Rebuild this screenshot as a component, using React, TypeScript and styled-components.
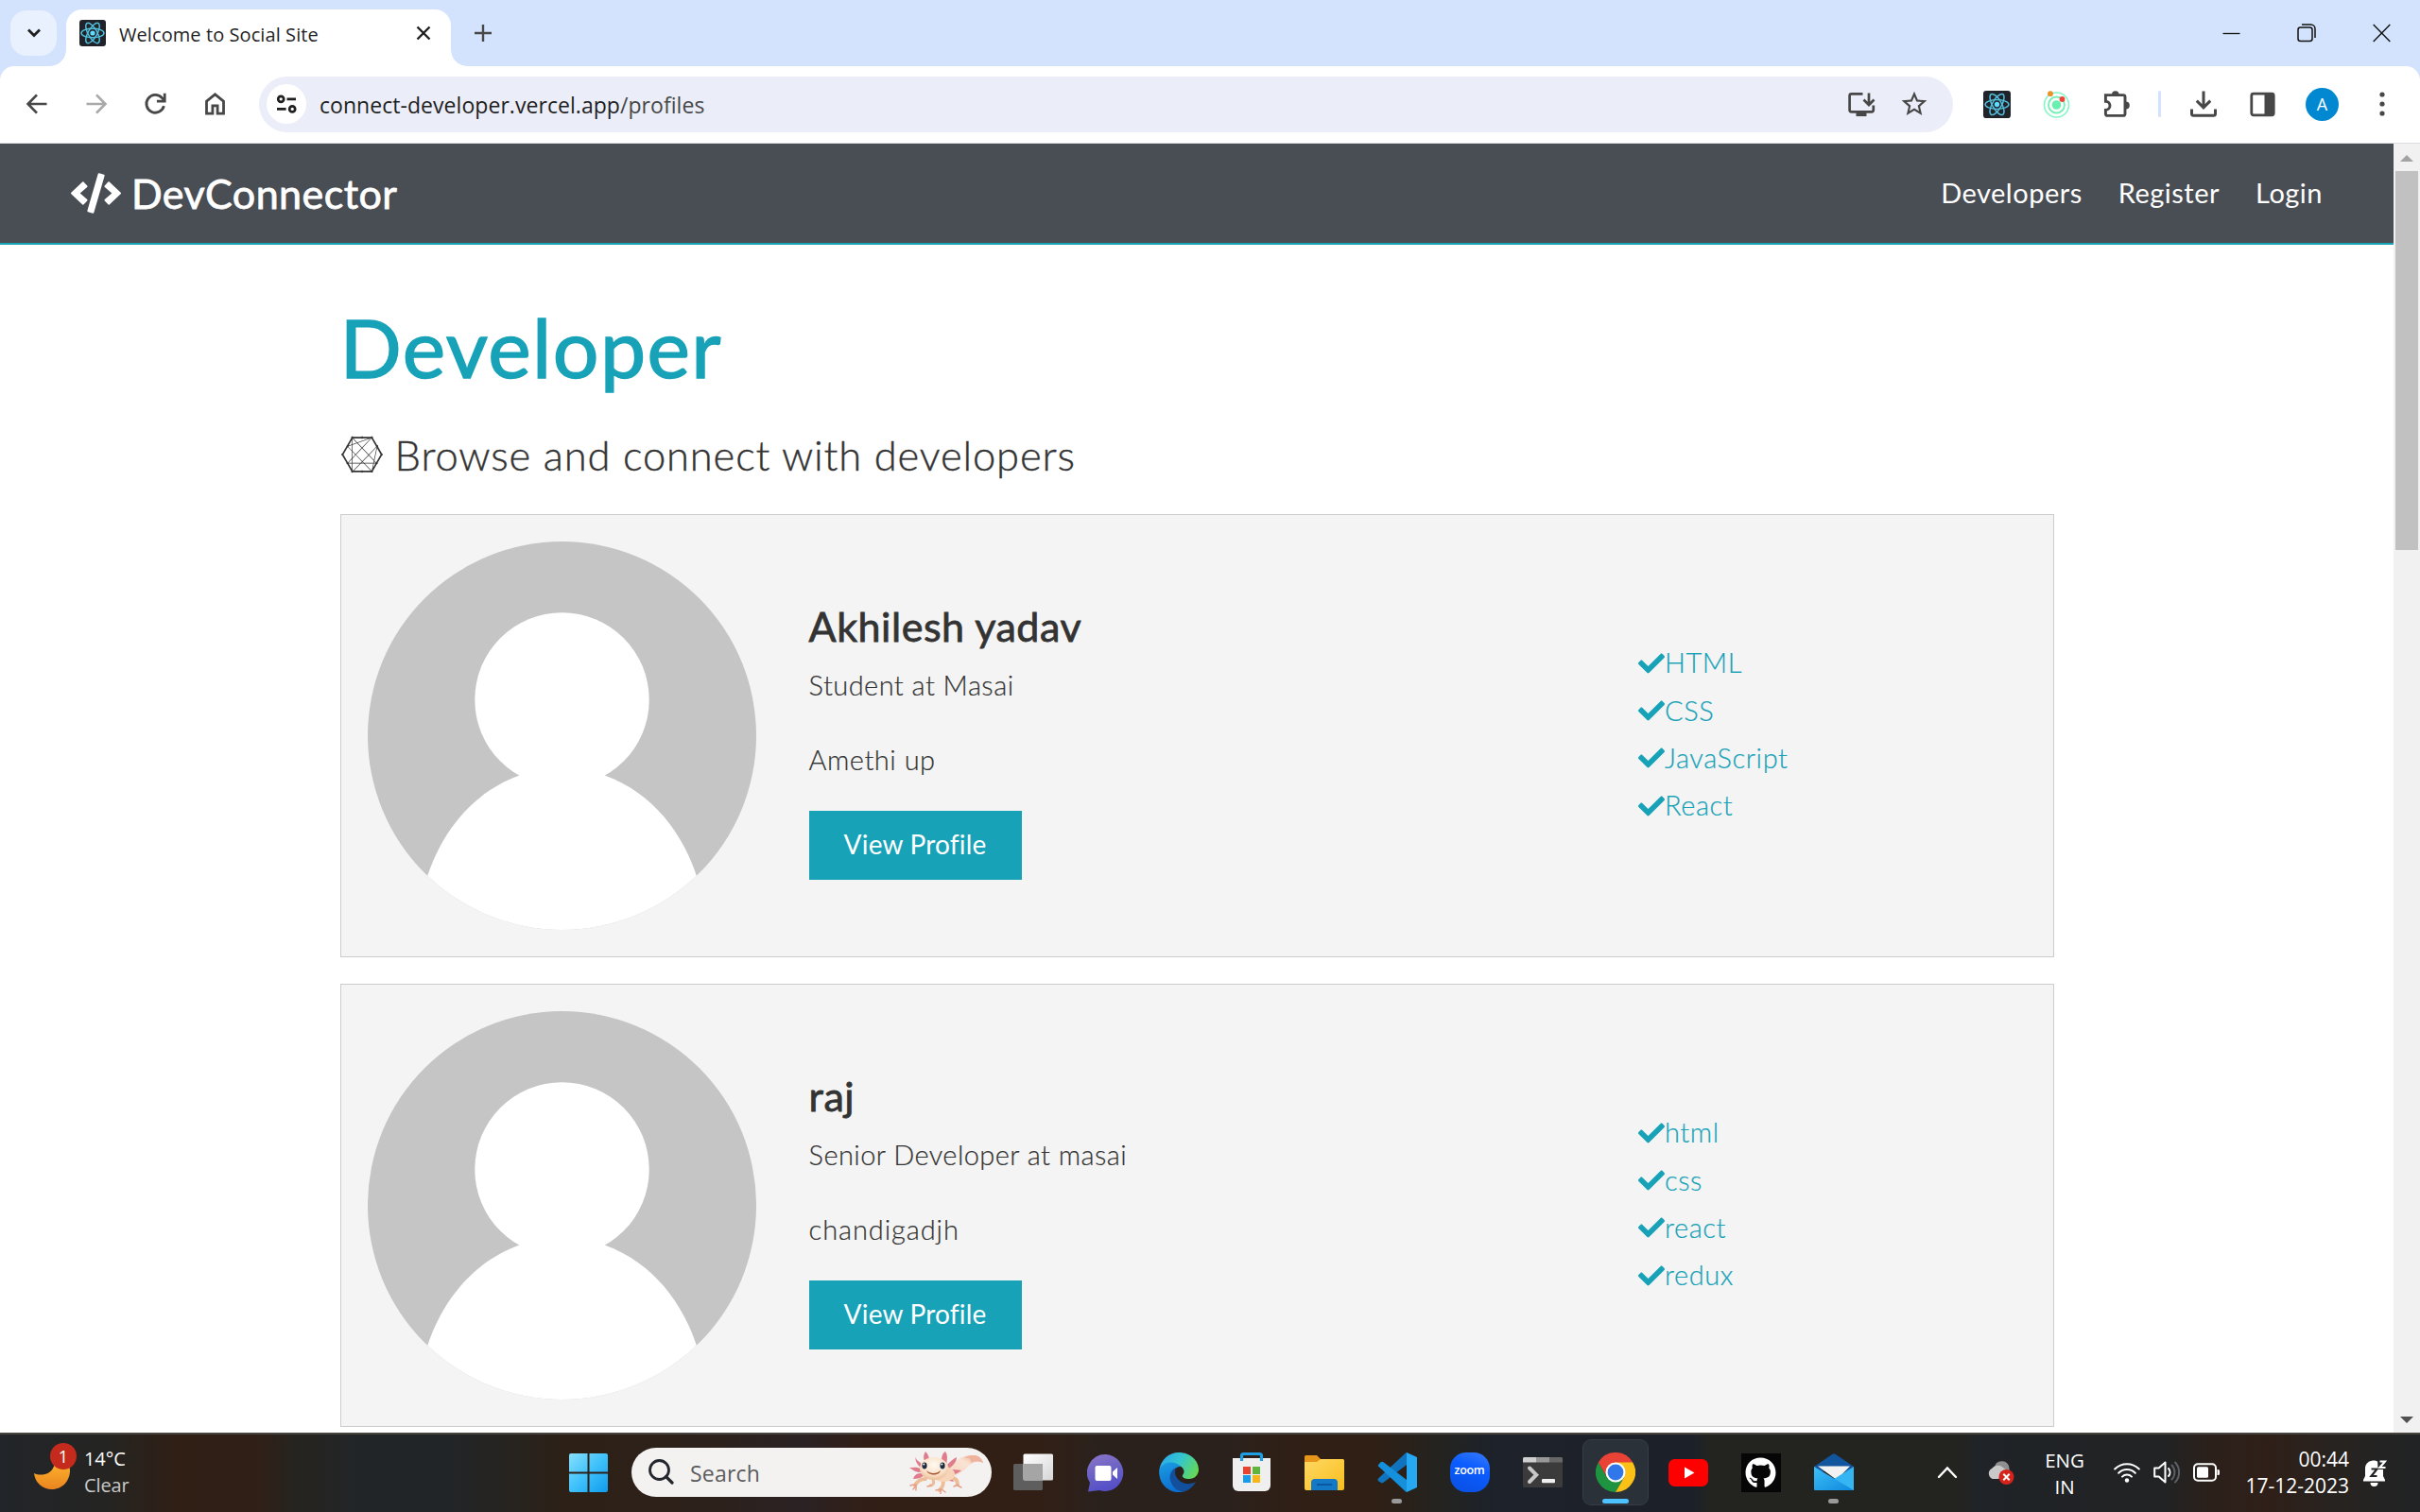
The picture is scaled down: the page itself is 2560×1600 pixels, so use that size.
import React from "react";
import styled, { createGlobalStyle, css } from "styled-components";
import { FaCheck, FaCode, FaConnectdevelop, FaGithub } from "react-icons/fa";

const TEAL = "#17a2b8";
const SITE_FONT = `"Lato", "Open Sans", sans-serif`;
const UI_FONT = `"Open Sans", "Noto Sans", sans-serif`;

const GlobalStyle = createGlobalStyle`
  * { box-sizing: border-box; }
  body { margin: 0; background: #fff; overflow: hidden; }
  h1, h2, p, ul { margin: 0; padding: 0; font-weight: inherit; }
  svg { display: block; flex: none; }
`;

const Screen = styled.div`
  width: 2560px;
  height: 1600px;
  display: flex;
  flex-direction: column;
  overflow: hidden;
  font-family: ${UI_FONT};
`;

/* ---------- browser frame ---------- */

const TabStrip = styled.div`
  height: 70px;
  flex: none;
  display: flex;
  align-items: flex-end;
  background: #d3e3fd;
`;

const TabSearchButton = styled.div`
  width: 49px;
  height: 48px;
  margin: 0 10px 11px 11px;
  border-radius: 17px;
  background: #e9f1fe;
  display: flex;
  align-items: center;
  justify-content: center;
`;

const Tab = styled.div`
  position: relative;
  width: 407px;
  height: 60px;
  border-radius: 17px 17px 0 0;
  background: #fff;
  display: flex;
  align-items: center;
  padding: 0 21px 10px 14px;
  &::before,
  &::after {
    content: "";
    position: absolute;
    bottom: 0;
    width: 17px;
    height: 17px;
  }
  &::before {
    left: -17px;
    background: radial-gradient(circle at 0 0, transparent 16.5px, #fff 17px);
  }
  &::after {
    right: -17px;
    background: radial-gradient(circle at 100% 0, transparent 16.5px, #fff 17px);
  }
`;

const TabTitle = styled.span`
  flex: 1;
  margin-left: 14px;
  padding-top: 3px;
  font-size: 20px;
  letter-spacing: 0.08px;
  line-height: 28px;
  color: #1f1f1f;
  white-space: nowrap;
`;

const NewTab = styled.div`
  width: 20px;
  margin: 0 auto 25px 24px;
`;

const WindowControls = styled.div`
  display: flex;
  gap: 60px;
  margin: 0 31px 25px 0;
`;

const ToolbarBack = styled.div`
  height: 82px;
  flex: none;
  background: #d3e3fd;
`;

const Toolbar = styled.div`
  height: 82px;
  border-bottom: 1px solid #dcdde1;
  border-radius: 15px 15px 0 0;
  background: #fff;
  display: flex;
  align-items: center;
  padding: 0 25px 1px 23px;
`;

const NavButtons = styled.div`
  display: flex;
  gap: 31px;
  margin-right: 30px;
`;

const Omnibox = styled.div`
  width: 1792px;
  height: 59px;
  flex: none;
  border-radius: 30px;
  background: #ebeef8;
  display: flex;
  align-items: center;
  padding: 0 25px 0 8px;
  color: #474747;
`;

const SiteInfo = styled.div`
  width: 42px;
  height: 42px;
  border-radius: 50%;
  background: #fff;
  display: flex;
  align-items: center;
  justify-content: center;
`;

const Url = styled.span`
  flex: 1;
  margin-left: 14px;
  padding-top: 2px;
  font-size: 23px;
  line-height: 34px;
  letter-spacing: 0.05px;
  color: #1f1f1f;
  white-space: nowrap;
`;

const UrlPath = styled.span`
  color: #474747;
`;

const BoxActions = styled.div`
  display: flex;
  gap: 24px;
`;

const Extensions = styled.div`
  display: flex;
  flex: none;
  align-items: center;
  gap: 31.5px;
  margin-left: 32px;
`;

const Divider = styled.div`
  width: 3px;
  height: 28px;
  margin: 0 -2px 0 -4px;
  border-radius: 2px;
  background: #d3e3fd;
`;

const Avatar = styled.div`
  width: 35px;
  height: 35px;
  border-radius: 50%;
  background: #0288d1;
  color: #fff;
  font-size: 18px;
  line-height: 35px;
  text-align: center;
`;

/* ---------- web page ---------- */

const Viewport = styled.div`
  height: 1364px;
  flex: none;
  display: flex;
  overflow: hidden;
  background: #fff;
`;

const Page = styled.div`
  width: 2532px;
  height: 1364px;
  overflow: hidden;
  font-family: ${SITE_FONT};
  font-size: 29px;
  line-height: 44.8px;
  color: #333;
`;

const SiteNav = styled.nav`
  height: 107px;
  display: flex;
  align-items: center;
  justify-content: space-between;
  padding: 0 75px;
  border-bottom: 2px solid ${TEAL};
  background: #494d54;
  color: #fff;
`;

const Brand = styled.div`
  display: flex;
  align-items: center;
  gap: 11px;
  font-size: 43px;
  line-height: 50px;
  letter-spacing: 0.45px;
  -webkit-text-stroke: 0.8px #fff;
`;

const NavLinks = styled.ul`
  display: flex;
  gap: 38px;
  padding: 0 0 1px;
  list-style: none;
  letter-spacing: 0.5px;
`;

const Main = styled.main`
  width: 1813px;
  margin-left: 359.6px;
  padding-top: 58px;
`;

const Title = styled.h1`
  height: 100px;
  font-size: 86px;
  line-height: 100px;
  letter-spacing: 1.4px;
  color: ${TEAL};
  -webkit-text-stroke: 1.4px ${TEAL};
`;

const Lead = styled.p`
  display: flex;
  align-items: center;
  gap: 12px;
  height: 50px;
  margin: 39px 0 38px;
  font-size: 43.5px;
  font-weight: 300;
  line-height: 50px;
  letter-spacing: 0.85px;
  -webkit-text-stroke: 0.4px #333;
`;

const ProfileCard = styled.section`
  display: grid;
  grid-template-columns: 2fr 4fr 2fr;
  gap: 56px;
  align-items: center;
  height: 468.75px;
  margin-bottom: 28.25px;
  padding: 28px;
  border: 1px solid #ccc;
  background: #f4f4f4;
  font-weight: 300;
`;

const Info = styled.div`
  padding-top: 12px;
  -webkit-text-stroke: 0.2px currentColor;
`;

const Name = styled.h2`
  margin-bottom: 14px;
  font-size: 43px;
  font-weight: 400;
  line-height: 50px;
  letter-spacing: 0.55px;
  -webkit-text-stroke: 0.8px #333;
`;

const Line = styled.p<{ $track: number }>`
  margin-bottom: 34px;
  line-height: 45px;
  letter-spacing: ${(p) => p.$track}px;
  & + & {
    margin-bottom: 32px;
  }
`;

const ProfileButton = styled.a`
  display: block;
  width: 225px;
  height: 73px;
  background: ${TEAL};
  color: #fff;
  font-size: 28px;
  font-weight: 400;
  line-height: 70px;
  text-align: center;
  letter-spacing: 0.2px;
  -webkit-text-stroke: 0;
`;

const Skills = styled.ul`
  padding-top: 3px;
  list-style: none;
  color: ${TEAL};
  -webkit-text-stroke: 0.2px ${TEAL};
`;

const Skill = styled.li`
  display: flex;
  align-items: center;
  margin-bottom: 5.6px;
  letter-spacing: 0.6px;
`;

const ScrollTrack = styled.div`
  width: 28px;
  display: flex;
  flex-direction: column;
  align-items: center;
  background: #f1f1f1;
`;

const ScrollThumb = styled.div`
  width: 24px;
  height: 401px;
  margin: 14px 0 auto;
  background: #c1c1c1;
`;

const ArrowUp = styled.div`
  margin-top: 12px;
  border: 7px solid transparent;
  border-top-width: 0;
  border-bottom-color: #a3a3a3;
  margin-bottom: -4px;
`;

const ArrowDown = styled.div`
  margin-bottom: 10px;
  border: 7px solid transparent;
  border-bottom-width: 0;
  border-top-color: #505050;
`;

/* ---------- taskbar ---------- */

const TaskbarRoot = styled.div`
  height: 84px;
  flex: none;
  display: flex;
  align-items: center;
  border-top: 2px solid #47433f;
  padding-bottom: 2px;
  color: #fff;
  background: linear-gradient(
    90deg,
    #222529 0, #242422 110px, #301f15 190px, #301f16 270px, #26241f 310px,
    #222528 380px, #222528 470px, #26231f 540px, #2d2016 600px, #2c211b 760px,
    #2b2224 850px, #311f15 920px, #311f15 1100px, #2b211c 1160px, #2b211c 1300px,
    #301f15 1370px, #301f15 1450px, #24231f 1520px, #1d222b 1580px,
    #1c2129 1790px, #232420 1810px, #23231f 2070px, #202327 2090px,
    #212324 2290px, #2c201b 2340px, #2f1f18 2400px, #272320 2470px, #212325 2560px
  );
`;

const Weather = styled.div`
  position: relative;
  width: 584px;
  height: 80px;
  display: flex;
  align-items: center;
  padding-left: 34px;
`;

const WeatherText = styled.div`
  display: flex;
  flex-direction: column;
  margin-left: 12px;
  font-size: 20px;
  line-height: 28px;
  letter-spacing: -0.1px;
`;

const Condition = styled.span`
  color: #c8c8c8;
`;

const Badge = styled.div`
  position: absolute;
  left: 53px;
  top: 9px;
  width: 28px;
  height: 28px;
  border-radius: 50%;
  background: #c42b1c;
  font-size: 18px;
  line-height: 28px;
  text-align: center;
`;

const Slot = styled.div`
  position: relative;
  width: 77px;
  height: 80px;
  flex: none;
  display: flex;
  align-items: center;
  justify-content: center;
`;

const ActiveTile = styled.div`
  width: 70px;
  height: 70px;
  border: 1px solid #363d44;
  border-radius: 9px;
  background: #2a3138;
  display: flex;
  align-items: center;
  justify-content: center;
`;

const Indicator = styled.div<{ $active?: boolean }>`
  position: absolute;
  bottom: 7px;
  height: 5px;
  border-radius: 3px;
  ${(p) =>
    p.$active
      ? css`
          width: 28px;
          background: #4cc2ff;
        `
      : css`
          width: 11px;
          background: #9a9a9a;
        `}
`;

const SearchPill = styled.div`
  width: 381px;
  height: 52px;
  margin: 0 5px 0 7px;
  flex: none;
  border-radius: 26px;
  background: #f3f2f1;
  display: flex;
  align-items: center;
  padding: 0 8px 0 17px;
  color: #5c5c5c;
  font-size: 23px;
  line-height: 32px;
  letter-spacing: 0.2px;
`;

const SearchLabel = styled.span`
  flex: 1;
  margin-left: 17px;
  padding-top: 1px;
`;

const Tray = styled.div`
  flex: 1;
  display: flex;
  align-items: center;
  justify-content: flex-end;
  padding-right: 35px;
  font-size: 21px;
  line-height: 28px;
`;

const Language = styled.div`
  width: 44px;
  margin: 2px 30px 0 31px;
  font-size: 20.5px;
  text-align: center;
`;

const TrayIcons = styled.div`
  display: flex;
  align-items: center;
  gap: 14px;
`;

const Clock = styled.div`
  width: 112px;
  margin: 0 15px 1px 25px;
  text-align: right;
`;

const CloudWrap = styled.div`
  margin-left: 31px;
`;

/* ---------- drawings ---------- */

const Atom = ({ size }: { size: number }) => (
  <svg width={size} height={size} viewBox="0 0 28 28">
    <rect width="28" height="28" rx="3" fill="#20232a" />
    <g fill="none" stroke="#53c1de" strokeWidth="1.4">
      <ellipse cx="14" cy="14" rx="12" ry="4.7" />
      <ellipse cx="14" cy="14" rx="12" ry="4.7" transform="rotate(60 14 14)" />
      <ellipse cx="14" cy="14" rx="12" ry="4.7" transform="rotate(120 14 14)" />
    </g>
    <circle cx="14" cy="14" r="2.6" fill="#61dafb" />
  </svg>
);

const line = (color: string, w: number) => ({
  fill: "none",
  stroke: color,
  strokeWidth: w,
});

const BackIcon = ({ color = "#474747", flip = false }: { color?: string; flip?: boolean }) => (
  <svg width="32" height="32" viewBox="0 0 32 32" {...line(color, 2.7)} transform={flip ? "scale(-1 1)" : undefined}>
    <path d="M26.5 16H7M16 6.4 6.6 16l9.4 9.6" />
  </svg>
);

const ReloadIcon = () => (
  <svg width="32" height="32" viewBox="0 0 32 32" {...line("#474747", 2.8)}>
    <path d="M24.4 18.2a9.4 9.4 0 1 1-2-8.6l2.2 2.6" />
    <path d="M25.2 4.8v8.3h-8.3" />
  </svg>
);

const HomeIcon = () => (
  <svg width="32" height="32" viewBox="0 0 32 32" {...line("#474747", 2.8)}>
    <path d="M6.500 26.2V13.2l9-7.3 9 7.3v13h-6.4v-8.4h-5.2v8.4z" />
  </svg>
);

const TuneIcon = () => (
  <svg width="24" height="24" viewBox="0 0 24 24" {...line("#1f1f1f", 2.7)}>
    <circle cx="6.2" cy="6.8" r="3" />
    <path d="M12.5 6.8H22M2 17.4h9.6" />
    <circle cx="18.2" cy="17.4" r="3" />
  </svg>
);

const InstallIcon = () => (
  <svg width="32" height="32" viewBox="0 0 32 32" {...line("#474747", 2.7)}>
    <path d="M17.5 5.3H5.6a2 2 0 0 0-2 2v15a2 2 0 0 0 2 2h21.2a2 2 0 0 0 2-2v-4.8" />
    <path d="M24 4.5v12M18.5 11.5 24 17l5.5-5.5" />
    <path d="M10.5 26.8h11" strokeWidth="4.5" />
  </svg>
);

const StarIcon = () => (
  <svg width="32" height="32" viewBox="0 0 24 24" fill="#474747">
    <path d="M22 9.24l-7.19-.62L12 2 9.19 8.63 2 9.24l5.46 4.73L5.82 21 12 17.27 18.18 21l-1.63-7.03L22 9.24zM12 15.4l-3.76 2.27 1-4.28-3.32-2.88 4.38-.38L12 6.1l1.71 4.04 4.38.38-3.32 2.88 1 4.28L12 15.4z" />
  </svg>
);

const OrbitIcon = () => (
  <svg width="33" height="29" viewBox="-2 0 33 29">
    <circle cx="14.5" cy="15" r="13" {...line("#86f5c6", 1.6)} />
    <circle cx="14.5" cy="15" r="8.5" {...line("#74efb6", 1.8)} />
    <circle cx="14.5" cy="15" r="4.8" fill="#69f0ae" />
    <circle cx="8" cy="3.2" r="2.9" fill="#e8922c" />
    <circle cx="20.5" cy="9" r="2.9" fill="#f04438" />
  </svg>
);

const PuzzleIcon = () => (
  <svg width="32" height="32" viewBox="0 0 32 32">
    <path
      {...line("#474747", 2.9)}
      d="M4.4 6.6h18.8a1.8 1.8 0 0 1 1.8 1.8v18.2a1.8 1.8 0 0 1-1.8 1.8H6.2a1.8 1.8 0 0 1-1.8-1.8v-4.2a4.6 4.6 0 0 0 0-9.200z"
    />
    <path fill="#474747" d="M11 6a3.8 3.8 0 0 1 7.6 0zM25.8 13.6a4 4 0 0 1 0 8z" />
  </svg>
);

const DownloadIcon = () => (
  <svg width="32" height="32" viewBox="0 0 32 32" {...line("#474747", 3)}>
    <path d="M16 2.5v17M8.8 12.6l7.2 7.2 7.2-7.2" />
    <path d="M3.5 21.5v4.7a2 2 0 0 0 2 2h21a2 2 0 0 0 2-2v-4.7" />
  </svg>
);

const SidePanelIcon = () => (
  <svg width="29" height="27" viewBox="-1 0 29 27">
    <rect x="1.8" y="2.2" width="23.4" height="22.6" rx="2" {...line("#474747", 2.8)} />
    <path d="M15.5 2h8a2 2 0 0 1 2 2v19a2 2 0 0 1-2 2h-8z" fill="#474747" />
  </svg>
);

const MoreIcon = () => (
  <svg width="28" height="28" viewBox="0 0 28 28" fill="#474747">
    <circle cx="14" cy="4" r="2.6" />
    <circle cx="14" cy="14" r="2.6" />
    <circle cx="14" cy="24" r="2.6" />
  </svg>
);

const Silhouette = () => (
  <svg width="411" height="411" viewBox="0 0 410 410">
    <defs>
      <clipPath id="portrait">
        <circle cx="205" cy="205" r="205" />
      </clipPath>
    </defs>
    <g clipPath="url(#portrait)">
      <rect width="410" height="410" fill="#c5c5c5" />
      <circle cx="205" cy="167" r="92" fill="#fff" />
      <path d="M62 356C77 309 108 266 160 247H250C302 266 333 309 348 356V410H62Z" fill="#fff" />
    </g>
  </svg>
);

const MoonIcon = () => (
  <svg width="43" height="40" viewBox="0 0 43 40">
    <defs>
      <linearGradient id="moon" x1="0" y1="0" x2="0" y2="1">
        <stop offset="0" stopColor="#ffbe2e" />
        <stop offset="1" stopColor="#ea8420" />
      </linearGradient>
    </defs>
    <path d="M2 21c9 4 24 1 22-18 9-1 16 6 16 15 0 11-8 20-19 20C11 38 3 31 2 21z" fill="url(#moon)" />
  </svg>
);

const WindowsLogo = () => (
  <svg width="41" height="41" viewBox="0 0 41 41">
    <defs>
      <linearGradient id="win" x1="0" y1="0" x2="1" y2="1">
        <stop offset="0" stopColor="#88dffc" />
        <stop offset="0.5" stopColor="#3fc1fb" />
        <stop offset="1" stopColor="#0f9bec" />
      </linearGradient>
    </defs>
    <path
      fill="url(#win)"
      d="M2 0h17.5v19.5H0V2a2 2 0 0 1 2-2zM21.5 0H39a2 2 0 0 1 2 2v17.5H21.5zM0 21.5h19.5V41H2a2 2 0 0 1-2-2zM21.5 21.5H41V39a2 2 0 0 1-2 2H21.5z"
    />
  </svg>
);

const Magnifier = () => (
  <svg width="28" height="28" viewBox="0 0 28 28" {...line("#23262d", 2.8)} strokeLinecap="round">
    <circle cx="12.5" cy="11.5" r="10" />
    <path d="M19.6 18.6 26 25" strokeWidth="3.2" />
  </svg>
);

const Axolotl = () => (
  <svg width="80" height="46" viewBox="0 0 80 46">
    <defs>
      <linearGradient id="tail" x1="0" y1="1" x2="1" y2="0">
        <stop offset="0" stopColor="#f6d3b8" />
        <stop offset="0.6" stopColor="#fae3d4" />
        <stop offset="1" stopColor="#e79a78" />
      </linearGradient>
      <radialGradient id="axoface" cx="0.5" cy="0.35" r="0.7">
        <stop offset="0" stopColor="#fff8ef" />
        <stop offset="0.6" stopColor="#fae2cb" />
        <stop offset="1" stopColor="#eab68e" />
      </radialGradient>
    </defs>
    <path d="M39 23C46 11 59 4 69 5c5 0 9 4 10 8-8-3-12 0-18 6-6 5-13 9-19 9z" fill="url(#tail)" />
    <path d="M69 5c5 0 9 4 10 8-5-3-9-2-13 0 1-4-2-6-7-5 3-2 7-3 10-3z" fill="#efb29c" />
    <g fill="#e07d8c">
      <path d="M13 13C8 10 6 6 9 6c-4 0 0 11 6 13z" />
      <path d="M17 11C15 6 17 3 18 1c3 3 4 6 4 10zM35 11c0-6 2-9 4-10 3 4 2 9 1 14z" />
      <path d="M41 15c4-4 6-6 10-8 0 5-4 9-8 12zM43 20c5 0 9 0 13 1-5 4-8 5-12 3zM40 26c4 1 7 4 8 7-5-1-8-2-11-5z" />
      <path d="M13 19C8 17 5 18 1 18c4 3 7 5 12 5zM13 24c-5 0-7 3-8 6 5 0 8-1 12-4z" />
    </g>
    <g fill="none" stroke="#edbd98" strokeWidth="4" strokeLinecap="round">
      <path d="M18 30c-4 0-9 2-11 7M36 30c2 4 0 9-3 12M45 29c6 0 7 4 7 7" />
      <path d="M26 31c2 4-1 6-3 6" strokeWidth="3" />
    </g>
    <g fill="none" stroke="#e69f88" strokeWidth="1.4" strokeLinecap="round">
      <path d="M8 36c-2 0-4 0-6 1M8 37l-3 4M8 38v4M34 41l-5 1M34 42v4M35 41l4 3M52 36l-4 2M52 37l4 2M24 37l-4 1" />
    </g>
    <ellipse cx="37" cy="25" rx="12" ry="8" fill="#f6d5b9" />
    <ellipse cx="27" cy="19" rx="15" ry="12" fill="url(#axoface)" />
    <ellipse cx="17" cy="16" rx="2.6" ry="3.4" fill="#1d2c43" />
    <ellipse cx="36" cy="16" rx="2.6" ry="3.4" fill="#1d2c43" />
    <circle cx="16.3" cy="14.6" r="1" fill="#fff" />
    <circle cx="35.3" cy="14.6" r="1" fill="#fff" />
    <path d="M19 21c4 4 11 4 15 0-1 6-13 6-15 0z" fill="#a8552d" />
  </svg>
);

const TaskViewIcon = () => (
  <svg width="42" height="40" viewBox="0 0 42 40">
    <defs>
      <linearGradient id="pane" x1="0" y1="0" x2="1" y2="1">
        <stop offset="0" stopColor="#fff" />
        <stop offset="1" stopColor="#d6d6d6" />
      </linearGradient>
    </defs>
    <rect x="0" y="11" width="31" height="28" rx="1.5" fill="#5e5e5e" />
    <rect x="10.5" y="0.5" width="31.5" height="28" rx="1.5" fill="url(#pane)" />
    <path d="M10.5 11H31v17.5H12a1.5 1.5 0 0 1-1.5-1.5z" fill="#a5a5a5" />
  </svg>
);

const ChatIcon = () => (
  <svg width="40" height="41" viewBox="0 0 40 41">
    <defs>
      <linearGradient id="chat" x1="0" y1="0" x2="0.3" y2="1">
        <stop offset="0" stopColor="#8d76c9" />
        <stop offset="0.55" stopColor="#6a62c4" />
        <stop offset="1" stopColor="#5550c8" />
      </linearGradient>
    </defs>
    <path d="M20 1a19.5 19.5 0 1 1-7 38.1L1 40.5 3 31A19.5 19.5 0 0 1 20 1z" fill="url(#chat)" />
    <rect x="8.5" y="13" width="17" height="16" rx="2" fill="#fff" />
    <path d="M27 19.5 32 15v12l-5-4.5z" fill="#fff" />
  </svg>
);

const EdgeIcon = () => (
  <svg width="42" height="42" viewBox="0 0 42 42">
    <defs>
      <linearGradient id="edgetop" x1="0" y1="0.3" x2="1" y2="0.7">
        <stop offset="0" stopColor="#2aa9e8" />
        <stop offset="0.45" stopColor="#34c6cf" />
        <stop offset="1" stopColor="#67d94f" />
      </linearGradient>
      <linearGradient id="edgeside" x1="0" y1="0" x2="0.3" y2="1">
        <stop offset="0" stopColor="#1b9de2" />
        <stop offset="1" stopColor="#0d6fd0" />
      </linearGradient>
    </defs>
    <path d="M21 0c12 0 21 8.5 21 18 0 6-4.5 10-10 10-4.5 0-8-1.5-7-4 3-3 2-9-6-11C12 11 4 13 0.5 18 2 8 10 0 21 0z" fill="url(#edgetop)" />
    <path d="M0.3 18C4 9 18 8 23 15c-5-1-9 5-8 11 1 8 7 13 14 14.5C25 42 23 42 21 42 9 42-1 32 0.3 18z" fill="url(#edgeside)" />
    <path d="M18 16c-6 3-8 10-5 16 3 7 9 10 15 9 5-2 9-6 11-10-5 3-12 3-17-1-5-4-6-9-4-14z" fill="#124f9c" />
  </svg>
);

const StoreIcon = () => (
  <svg width="42" height="44" viewBox="0 0 42 44">
    <path d="M1 7h40v29a6 6 0 0 1-6 6H7a6 6 0 0 1-6-6z" fill="#efefef" />
    <path d="M10.5 10V4.5a2 2 0 0 1 2-2h17a2 2 0 0 1 2 2V10" {...line("#1e9fe4", 3.2)} />
    <rect x="12" y="16" width="8" height="8" fill="#e8432e" />
    <rect x="22" y="16" width="8" height="8" fill="#5fb43c" />
    <rect x="12" y="25" width="8" height="8" fill="#169ce8" />
    <rect x="22" y="25" width="8" height="8" fill="#f8b616" />
  </svg>
);

const FolderIcon = () => (
  <svg width="42" height="37" viewBox="0 0 42 37">
    <defs>
      <linearGradient id="folder" x1="0" y1="0" x2="1" y2="1">
        <stop offset="0" stopColor="#ffd964" />
        <stop offset="1" stopColor="#f8bd1c" />
      </linearGradient>
    </defs>
    <path d="M0 1.5A1.5 1.5 0 0 1 1.5 0H13l4 4v5H0z" fill="#e8961a" />
    <path d="M0 7h13l4-3h23.5A1.5 1.5 0 0 1 42 5.5V35a2 2 0 0 1-2 2H2a2 2 0 0 1-2-2z" fill="url(#folder)" />
    <path d="M7 37v-8a4 4 0 0 1 4-4h20a4 4 0 0 1 4 4v8z" fill="#1378c6" />
    <path d="M13 31h16" {...line("#0b549c", 1.8)} />
  </svg>
);

const CodeEditorIcon = () => (
  <svg width="42" height="42" viewBox="0 0 42 42">
    <path d="M0.5 28 30 0.5 31 0v13L6.5 31.8a2.5 2.5 0 0 1-3 0L0.8 30z" fill="#0f73bd" />
    <path d="M3.5 10.2a2.5 2.5 0 0 1 3 0L31 29v13l-1-.5L0.5 14z" fill="#1490dc" />
    <path d="M31 0 42 5v32l-11 5z" fill="#27a8f2" />
  </svg>
);

const ZoomTile = styled.div`
  width: 42px;
  height: 42px;
  border-radius: 17px;
  background: linear-gradient(200deg, #3a7cf8 0, #0b5cff 40%, #0a4fe0 100%);
  color: #fff;
  font-size: 12.5px;
  font-weight: 600;
  line-height: 38px;
  text-align: center;
  letter-spacing: -0.3px;
`;

const TerminalIcon = () => (
  <svg width="42" height="32" viewBox="0 0 42 32">
    <rect width="42" height="32" rx="1.5" fill="#3b3b3b" />
    <path d="M1.5 0H14v5.5H0v-4A1.5 1.5 0 0 1 1.5 0z" fill="#cfcfcf" />
    <path d="M14 0h14v5.5H14z" fill="#989898" />
    <path d="M28 0h12.5A1.5 1.5 0 0 1 42 1.5v4H28z" fill="#666" />
    <path d="m7 11.5 7.2 7.2L7 26" {...line("#c9c9c9", 4)} strokeLinecap="round" />
    <rect x="20" y="23" width="14" height="4.2" rx="1" fill="#f0f0f0" />
  </svg>
);

const ChromeIcon = () => (
  <svg width="42" height="42" viewBox="0 0 42 42">
    <path d="M21 21 2.8 10.5A21 21 0 0 1 39.2 10.5z" fill="#ea4335" />
    <path d="M21 21 11.9 26.2 2.8 10.5A21 21 0 0 0 21 42l9-15.7z" fill="#1e9340" />
    <path d="M21 10.5h18.2A21 21 0 0 1 21 42l9.1-15.8z" fill="#fbc116" />
    <path d="M21 10.5H2.8L12 26.2z" fill="#ea4335" />
    <circle cx="21" cy="21" r="10.5" fill="#fff" />
    <circle cx="21" cy="21" r="8.4" fill="#3077ea" />
  </svg>
);

const YoutubeIcon = () => (
  <svg width="42" height="29" viewBox="0 0 42 29">
    <rect width="42" height="29" rx="6.5" fill="#f00" />
    <path d="m17 8.5 10.5 6L17 20.5z" fill="#fff" />
  </svg>
);

const GithubTile = styled.div`
  width: 42px;
  height: 41px;
  background: #060606;
  color: #fff;
  display: flex;
  align-items: center;
  justify-content: center;
`;

const MailIcon = () => (
  <svg width="42" height="40" viewBox="0 0 42 40">
    <defs>
      <linearGradient id="mail" x1="0" y1="0" x2="1" y2="1">
        <stop offset="0" stopColor="#3cc0f8" />
        <stop offset="1" stopColor="#0f88dc" />
      </linearGradient>
    </defs>
    <path d="M0 14 19.5 0.8a2.5 2.5 0 0 1 3 0L42 14v5H0z" fill="#12559f" />
    <path d="M4 13.5h34L24 28z" fill="#f2f2f2" />
    <path d="M42 14v25H2z" fill="#35b5f2" />
    <path d="M0 14 42 39H1a1 1 0 0 1-1-1z" fill="url(#mail)" />
  </svg>
);

const TrayChevron = () => (
  <svg width="22" height="14" viewBox="0 0 22 14" {...line("#fff", 2.4)} strokeLinecap="round">
    <path d="m2 12 9-9.5L20 12" />
  </svg>
);

const CloudError = () => (
  <svg width="29" height="28" viewBox="0 0 29 28">
    <path d="M8 8a8 8 0 0 1 15-1l1 6-12 4z" fill="#8f8f8f" />
    <path d="M6 21a6 6 0 0 1-1-11 8 8 0 0 1 12-1l5 4-10 8z" fill="#c9c9c9" />
    <circle cx="20.5" cy="19" r="8" fill="#d6231b" />
    <path d="m17.3 15.8 6.4 6.4m0-6.4-6.4 6.4" {...line("#fff", 2)} />
  </svg>
);

const WifiIcon = () => (
  <svg width="28" height="24" viewBox="0 0 28 24" {...line("#fff", 2)} strokeLinecap="round">
    <path d="M1.2 8.5a18 18 0 0 1 25.6 0M5.2 12.7a12.4 12.4 0 0 1 17.6 0M9 16.6a7 7 0 0 1 10 0" />
    <circle cx="14" cy="20.5" r="2.2" fill="#fff" stroke="none" />
  </svg>
);

const VolumeIcon = () => (
  <svg width="28" height="26" viewBox="0 0 28 26" {...line("#fff", 2)} strokeLinejoin="round" strokeLinecap="round">
    <path d="M1.2 8.5h4.5L12.5 2.5v21L5.7 17.5H1.2z" />
    <path d="M16 9a6 6 0 0 1 0 8" />
    <path d="M19.5 5.5a11 11 0 0 1 0 15M23 2.5a15.5 15.5 0 0 1 0 21" stroke="#5b5f63" />
  </svg>
);

const BatteryIcon = () => (
  <svg width="28" height="20" viewBox="0 0 28 20">
    <rect x="1" y="1.2" width="23" height="17.6" rx="4" {...line("#fff", 2)} />
    <rect x="4" y="4.2" width="12" height="11.6" rx="1.5" fill="#fff" />
    <path d="M25.5 7h1a1.5 1.5 0 0 1 1.5 1.5v3a1.5 1.5 0 0 1-1.5 1.5h-1z" fill="#fff" />
  </svg>
);

const BellIcon = () => (
  <svg width="25" height="29" viewBox="0 0 25 29">
    <path d="M10.5 1.5c2 0 3.5.3 5 1.300V10H21v8l2 4v1.5H0V22l2-4v-8c0-5 4-8.5 8.5-8.5z" fill="#fff" />
    <path d="M7.5 25h8a4 4 0 0 1-8 0z" fill="#fff" />
    <path d="M8.500 10.5h6l-6 7.5h6" {...line("#222426", 2.2)} />
    <path d="M15 0h10v11H16z" fill="#222426" />
    <path d="M17.5 2.5h5.5l-5.5 6.5h6" {...line("#fff", 2.2)} />
  </svg>
);

/* ---------- data ---------- */

type Profile = {
  name: string;
  role: string;
  roleTrack: number;
  place: string;
  placeTrack: number;
  skills: string[];
};

const profiles: Profile[] = [
  {
    name: "Akhilesh yadav",
    role: "Student at Masai",
    roleTrack: 0.45,
    place: "Amethi up",
    placeTrack: 0.5,
    skills: ["HTML", "CSS", "JavaScript", "React"],
  },
  {
    name: "raj",
    role: "Senior Developer at masai",
    roleTrack: 0.43,
    place: "chandigadjh",
    placeTrack: 0.9,
    skills: ["html", "css", "react", "redux"],
  },
];

const pinned: { icon: React.ReactNode; open?: boolean; active?: boolean }[] = [
  { icon: <TaskViewIcon /> },
  { icon: <ChatIcon /> },
  { icon: <EdgeIcon /> },
  { icon: <StoreIcon /> },
  { icon: <FolderIcon /> },
  { icon: <CodeEditorIcon />, open: true },
  { icon: <ZoomTile>zoom</ZoomTile> },
  { icon: <TerminalIcon /> },
  { icon: <ChromeIcon />, active: true },
  { icon: <YoutubeIcon /> },
  { icon: <GithubTile><FaGithub size={33} /></GithubTile> },
  { icon: <MailIcon />, open: true },
];

/* ---------- sections ---------- */

const BrowserFrame = () => (
  <>
    <TabStrip>
      <TabSearchButton>
        <svg width="16" height="12" viewBox="0 0 16 12" {...line("#1f1f1f", 2.8)}>
          <path d="m2 2.5 6 6 6-6" />
        </svg>
      </TabSearchButton>
      <Tab>
        <Atom size={28} />
        <TabTitle>Welcome to Social Site</TabTitle>
        <svg width="16" height="16" viewBox="0 0 16 16" {...line("#1f1f1f", 2.4)}>
          <path d="m1.5 1.5 13 13m0-13-13 13" />
        </svg>
      </Tab>
      <NewTab>
        <svg width="20" height="20" viewBox="0 0 20 20" {...line("#474747", 2.4)}>
          <path d="M10 1v18M1 10h18" />
        </svg>
      </NewTab>
      <WindowControls>
        <svg width="19" height="20" viewBox="0 0 19 20" {...line("#111", 1.3)}>
          <path d="M0.5 10.5h18" />
        </svg>
        <svg width="20" height="20" viewBox="0 0 20 20" {...line("#111", 1.5)}>
          <rect x="1" y="4" width="15" height="14.5" rx="2.5" />
          <path d="M5 1h9.5a4.5 4.5 0 0 1 4.5 4.5V15" />
        </svg>
        <svg width="19" height="20" viewBox="0 0 19 20" {...line("#111", 1.4)}>
          <path d="m0.7 1 17.6 18m0-18L0.7 19" />
        </svg>
      </WindowControls>
    </TabStrip>
    <ToolbarBack>
      <Toolbar>
        <NavButtons>
          <BackIcon />
          <BackIcon color="#a9a9a9" flip />
          <ReloadIcon />
          <HomeIcon />
        </NavButtons>
        <Omnibox>
          <SiteInfo>
            <TuneIcon />
          </SiteInfo>
          <Url>
            connect-developer.vercel.app<UrlPath>/profiles</UrlPath>
          </Url>
          <BoxActions>
            <InstallIcon />
            <StarIcon />
          </BoxActions>
        </Omnibox>
        <Extensions>
          <Atom size={29} />
          <OrbitIcon />
          <PuzzleIcon />
          <Divider />
          <DownloadIcon />
          <SidePanelIcon />
          <Avatar>A</Avatar>
          <MoreIcon />
        </Extensions>
      </Toolbar>
    </ToolbarBack>
  </>
);

const SitePage = () => (
  <Viewport>
    <Page>
      <SiteNav>
        <Brand>
          <FaCode size={53} strokeWidth={0} />
          <span>DevConnector</span>
        </Brand>
        <NavLinks>
          <li>Developers</li>
          <li>Register</li>
          <li>Login</li>
        </NavLinks>
      </SiteNav>
      <Main>
        <Title>Developer</Title>
        <Lead>
          <FaConnectdevelop size={46} strokeWidth={0} />
          <span>Browse and connect with developers</span>
        </Lead>
        {profiles.map((p) => (
          <ProfileCard key={p.name}>
            <Silhouette />
            <Info>
              <Name>{p.name}</Name>
              <Line $track={p.roleTrack}>{p.role}</Line>
              <Line $track={p.placeTrack}>{p.place}</Line>
              <ProfileButton>View Profile</ProfileButton>
            </Info>
            <Skills>
              {p.skills.map((s) => (
                <Skill key={s}>
                  <FaCheck size={28} />
                  {s}
                </Skill>
              ))}
            </Skills>
          </ProfileCard>
        ))}
      </Main>
    </Page>
    <ScrollTrack>
      <ArrowUp />
      <ScrollThumb />
      <ArrowDown />
    </ScrollTrack>
  </Viewport>
);

const Taskbar = () => (
  <TaskbarRoot>
    <Weather>
      <MoonIcon />
      <Badge>1</Badge>
      <WeatherText>
        <span>14°C</span>
        <Condition>Clear</Condition>
      </WeatherText>
    </Weather>
    <Slot>
      <WindowsLogo />
    </Slot>
    <SearchPill>
      <Magnifier />
      <SearchLabel>Search</SearchLabel>
      <Axolotl />
    </SearchPill>
    {pinned.map((app, i) => (
      <Slot key={i}>
        {app.active ? <ActiveTile>{app.icon}</ActiveTile> : app.icon}
        {(app.open || app.active) && <Indicator $active={app.active} />}
      </Slot>
    ))}
    <Tray>
      <TrayChevron />
      <CloudWrap>
        <CloudError />
      </CloudWrap>
      <Language>
        ENG
        <br />
        IN
      </Language>
      <TrayIcons>
        <WifiIcon />
        <VolumeIcon />
        <BatteryIcon />
      </TrayIcons>
      <Clock>
        00:44
        <br />
        17-12-2023
      </Clock>
      <BellIcon />
    </Tray>
  </TaskbarRoot>
);

export default function App() {
  return (
    <Screen>
      <GlobalStyle />
      <BrowserFrame />
      <SitePage />
      <Taskbar />
    </Screen>
  );
}
